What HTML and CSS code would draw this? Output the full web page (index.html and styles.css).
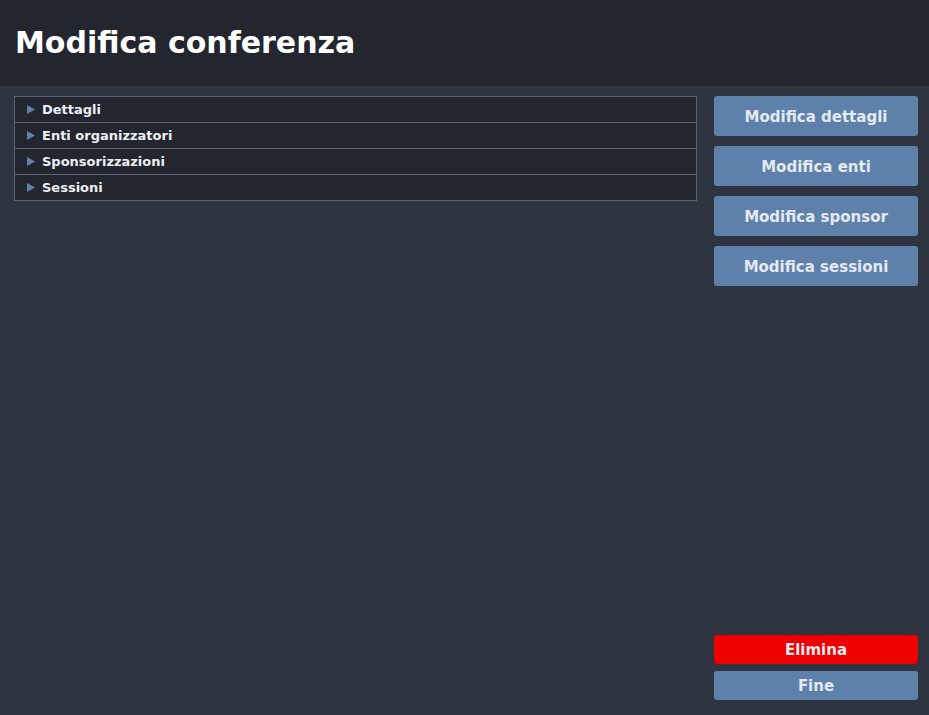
FILE: index.html
```html
<!DOCTYPE html>
<html lang="it">
<head>
<meta charset="utf-8">
<title>Modifica conferenza</title>
<link rel="stylesheet" href="styles.css">
</head>
<body>
<header class="topbar">
  <h1 class="title">Modifica conferenza</h1>
</header>
<main class="content">
  <section class="sections">
    <div class="row"><svg class="arrow" width="8" height="9" viewBox="0 0 8 9"><polygon points="0,0 8,4.5 0,9"/></svg>Dettagli</div>
    <div class="row"><svg class="arrow" width="8" height="9" viewBox="0 0 8 9"><polygon points="0,0 8,4.5 0,9"/></svg>Enti organizzatori</div>
    <div class="row"><svg class="arrow" width="8" height="9" viewBox="0 0 8 9"><polygon points="0,0 8,4.5 0,9"/></svg>Sponsorizzazioni</div>
    <div class="row"><svg class="arrow" width="8" height="9" viewBox="0 0 8 9"><polygon points="0,0 8,4.5 0,9"/></svg>Sessioni</div>
  </section>
  <aside class="actions">
    <div class="top-actions">
      <button class="btn big">Modifica dettagli</button>
      <button class="btn big">Modifica enti</button>
      <button class="btn big">Modifica sponsor</button>
      <button class="btn big">Modifica sessioni</button>
    </div>
    <div class="bottom-actions">
      <button class="btn small danger">Elimina</button>
      <button class="btn small">Fine</button>
    </div>
  </aside>
</main>
</body>
</html>
```
FILE: styles.css
```css
* { box-sizing: border-box; }
html, body { height: 100%; }
body {
  margin: 0;
  background: #2e3440;
  color: #eceff4;
  font-family: "DejaVu Sans", "Liberation Sans", sans-serif;
  display: flex;
  flex-direction: column;
}
.topbar {
  height: 86px;
  background: #23262f;
  display: flex;
  align-items: center;
  padding-left: 15px;
}
.title {
  margin: 0;
  font-size: 30px;
  font-weight: bold;
  color: #ffffff;
  padding-bottom: 1px;
}
.content {
  flex: 1;
  display: flex;
  gap: 17px;
  padding: 10px 11px 15px 14px;
}
.sections {
  flex: 1;
  align-self: flex-start;
  display: flex;
  flex-direction: column;
}
.row {
  height: 26px;
  background: #23262f;
  border: 1px solid #5c6272;
  border-top: none;
  display: flex;
  align-items: center;
  padding-left: 12px;
  font-size: 13px;
  font-weight: bold;
  color: #eceff4;
}
.row:first-child { border-top: 1px solid #5c6272; height: 27px; }
.arrow {
  fill: #5e81ac;
  margin-right: 7px;
  flex: none;
}
.actions {
  width: 204px;
  display: flex;
  flex-direction: column;
  justify-content: space-between;
}
.top-actions, .bottom-actions {
  display: flex;
  flex-direction: column;
}
.top-actions { gap: 10px; }
.bottom-actions { gap: 7px; }
.btn {
  border: none;
  border-radius: 3px;
  background: #5e81ac;
  color: #e5e9f0;
  font-family: "DejaVu Sans", "Liberation Sans", sans-serif;
  font-weight: bold;
  font-size: 15px;
  padding: 1px 0 0;
  width: 100%;
}
.big { height: 40px; }
.small { height: 29px; }
.danger { background: #ee0000; }
```
